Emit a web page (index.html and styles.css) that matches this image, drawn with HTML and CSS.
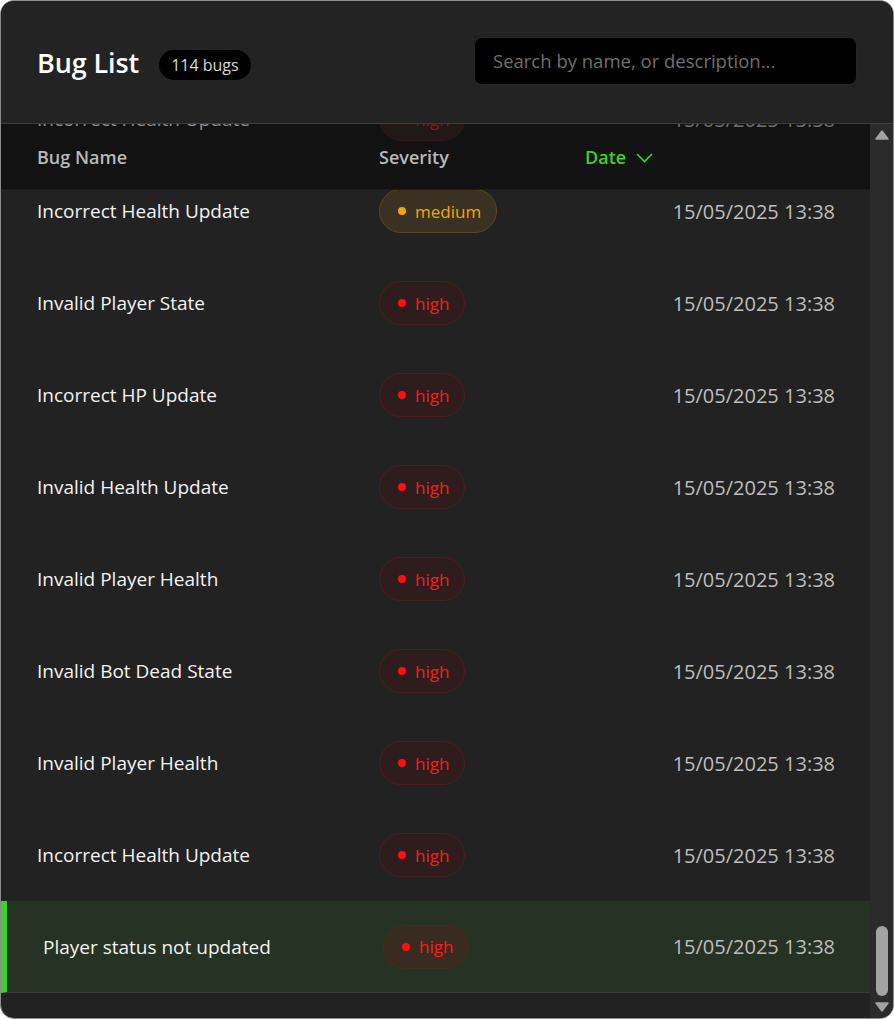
FILE: index.html
```html
<!DOCTYPE html>
<html lang="en">
<head>
<meta charset="utf-8">
<title>Bug List</title>
<link rel="stylesheet" href="styles.css">
</head>
<body>
<div class="card">
  <header class="header">
    <div class="title-group">
      <h1 class="title">Bug List</h1>
      <span class="count">114 bugs</span>
    </div>
    <div class="search">Search by name, or description...</div>
  </header>
  <div class="main">
    <div class="table">
      <div class="ghost row">
        <span class="c-name">Incorrect Health Update</span>
        <span class="c-sev"><span class="badge high"><i class="dot"></i>high</span></span>
        <span class="c-date">15/05/2025 13:38</span>
      </div>
      <div class="thead">
        <span class="c-name">Bug Name</span>
        <span class="c-sev">Severity</span>
        <span class="c-sort">Date
          <svg width="17" height="10" viewBox="0 0 17 10"><path d="M1 1 L8.5 8.5 L16 1" fill="none" stroke="#3ed12b" stroke-width="1.6"/></svg>
        </span>
      </div>
      <div class="tbody">
        <div class="list">
          <div class="row"><span class="c-name">Incorrect Health Update</span><span class="c-sev"><span class="badge medium"><i class="dot"></i>medium</span></span><span class="c-date">15/05/2025 13:38</span></div>
          <div class="row"><span class="c-name">Invalid Player State</span><span class="c-sev"><span class="badge high"><i class="dot"></i>high</span></span><span class="c-date">15/05/2025 13:38</span></div>
          <div class="row"><span class="c-name">Incorrect HP Update</span><span class="c-sev"><span class="badge high"><i class="dot"></i>high</span></span><span class="c-date">15/05/2025 13:38</span></div>
          <div class="row"><span class="c-name">Invalid Health Update</span><span class="c-sev"><span class="badge high"><i class="dot"></i>high</span></span><span class="c-date">15/05/2025 13:38</span></div>
          <div class="row"><span class="c-name">Invalid Player Health</span><span class="c-sev"><span class="badge high"><i class="dot"></i>high</span></span><span class="c-date">15/05/2025 13:38</span></div>
          <div class="row"><span class="c-name">Invalid Bot Dead State</span><span class="c-sev"><span class="badge high"><i class="dot"></i>high</span></span><span class="c-date">15/05/2025 13:38</span></div>
          <div class="row"><span class="c-name">Invalid Player Health</span><span class="c-sev"><span class="badge high"><i class="dot"></i>high</span></span><span class="c-date">15/05/2025 13:38</span></div>
          <div class="row"><span class="c-name">Incorrect Health Update</span><span class="c-sev"><span class="badge high"><i class="dot"></i>high</span></span><span class="c-date">15/05/2025 13:38</span></div>
          <div class="row selected"><span class="c-name">Player status not updated</span><span class="c-sev"><span class="badge high"><i class="dot"></i>high</span></span><span class="c-date">15/05/2025 13:38</span></div>
        </div>
      </div>
    </div>
    <div class="scrollbar">
      <svg class="arrow" width="14" height="10" viewBox="0 0 14 10"><path d="M7 1 L13 9 L1 9 Z" fill="#a3a3a3" stroke="#a3a3a3" stroke-linejoin="round" stroke-width="1.5"/></svg>
      <div class="track"><div class="thumb"></div></div>
      <svg class="arrow" width="14" height="10" viewBox="0 0 14 10"><path d="M1 1 L13 1 L7 9 Z" fill="#a3a3a3" stroke="#a3a3a3" stroke-linejoin="round" stroke-width="1.5"/></svg>
    </div>
  </div>
</div>
</body>
</html>
```

FILE: styles.css
```css
* { box-sizing: border-box; }
html, body { margin: 0; padding: 0; background: #ffffff; }
body { font-family: "Open Sans", "Noto Sans", sans-serif; }

.card {
  width: 894px;
  height: 1019px;
  border: 1px solid #8c8c8c;
  border-radius: 14px;
  background: #222222;
  overflow: hidden;
  display: flex;
  flex-direction: column;
}

.header {
  height: 123px;
  flex: none;
  background: #232323;
  border-bottom: 1px solid #3c3c3c;
  display: flex;
  align-items: center;
  justify-content: space-between;
  padding: 0 36px 0 36px;
}
.title-group { display: flex; align-items: center; gap: 20px; margin-top: 0; }
.title {
  margin: 0;
  font-size: 27px;
  font-weight: 600;
  color: #ffffff;
  letter-spacing: -0.1px;
}
.count {
  background: #000;
  color: #d8d8d8;
  font-size: 16px;
  height: 30px;
  line-height: 30px;
  padding: 0 12px;
  border-radius: 15px;
  margin-top: 6px;
}
.search {
  width: 383px;
  height: 48px;
  background: #000;
  border: 1px solid #262626;
  border-radius: 8px;
  color: #6f6f6f;
  font-size: 18.5px;
  line-height: 46px;
  padding-left: 18px;
  margin-top: -3px;
}

.main { flex: 1; display: flex; min-height: 0; }
.table {
  flex: 1;
  position: relative;
  overflow: hidden;
  display: flex;
  flex-direction: column;
}
.thead {
  height: 66px;
  flex: none;
  background: #121212;
  display: flex;
  align-items: center;
  padding: 0 35px 0 36px;
  color: #b9b9b9;
  font-size: 18px;
  font-weight: 600;
  border-bottom: 1px solid #1c1c1c;
}
.ghost {
  position: absolute;
  top: -51px;
  left: 0;
  right: 0;
  opacity: 0.55;
  z-index: 2;
}
.c-name { width: 342px; flex: none; }
.c-sev { width: 206px; flex: none; display: flex; }
.c-sort { color: #3ed12b; display: flex; align-items: center; gap: 10px; }
.c-sort svg { margin-top: 2px; }
.c-date { flex: 1; text-align: right; color: #bdbdbd; font-size: 20px; white-space: nowrap; }

.tbody { flex: 1; overflow: hidden; }
.list { margin-top: -25px; }
.row {
  height: 92px;
  display: flex;
  align-items: center;
  padding: 0 35px 0 36px;
  font-size: 19px;
  font-weight: 500;
  color: #f2f2f2;
}
.row.selected {
  background: #263223;
  border-left: 6px solid #3ed12b;
  padding-left: 36px;
  border-bottom: 1px solid #3a3a3a;
}
.row.selected .c-name { width: 340px; }

.badge {
  display: inline-flex;
  align-items: center;
  gap: 9px;
  height: 44px;
  padding: 0 15px 0 18px;
  border-radius: 22px;
  font-size: 17px;
  font-weight: 400;
}
.dot { width: 8px; height: 8px; border-radius: 50%; display: inline-block; }
.badge.high { background: #2f1d1d; border: 1px solid #4d1e1e; color: #ff1a1a; }
.badge.high .dot { background: #ff0f0f; }
.badge.medium { background: #3a3122; border: 1px solid #5c4721; color: #f6a20a; }
.badge.medium .dot { background: #f6a20a; }
.row.selected .badge.high { background: #3a2b20; border-color: #4a2a1e; }

.scrollbar {
  width: 23px;
  flex: none;
  background: #2b2b2b;
  display: flex;
  flex-direction: column;
  align-items: center;
  padding: 6px 0 6px 1px;
}
.arrow { flex: none; }
.track { flex: 1; width: 100%; display: flex; justify-content: center; align-items: flex-end; padding: 0 0 6px; }
.thumb { width: 12px; height: 70px; border-radius: 6px; background: #a3a3a3; }
```
